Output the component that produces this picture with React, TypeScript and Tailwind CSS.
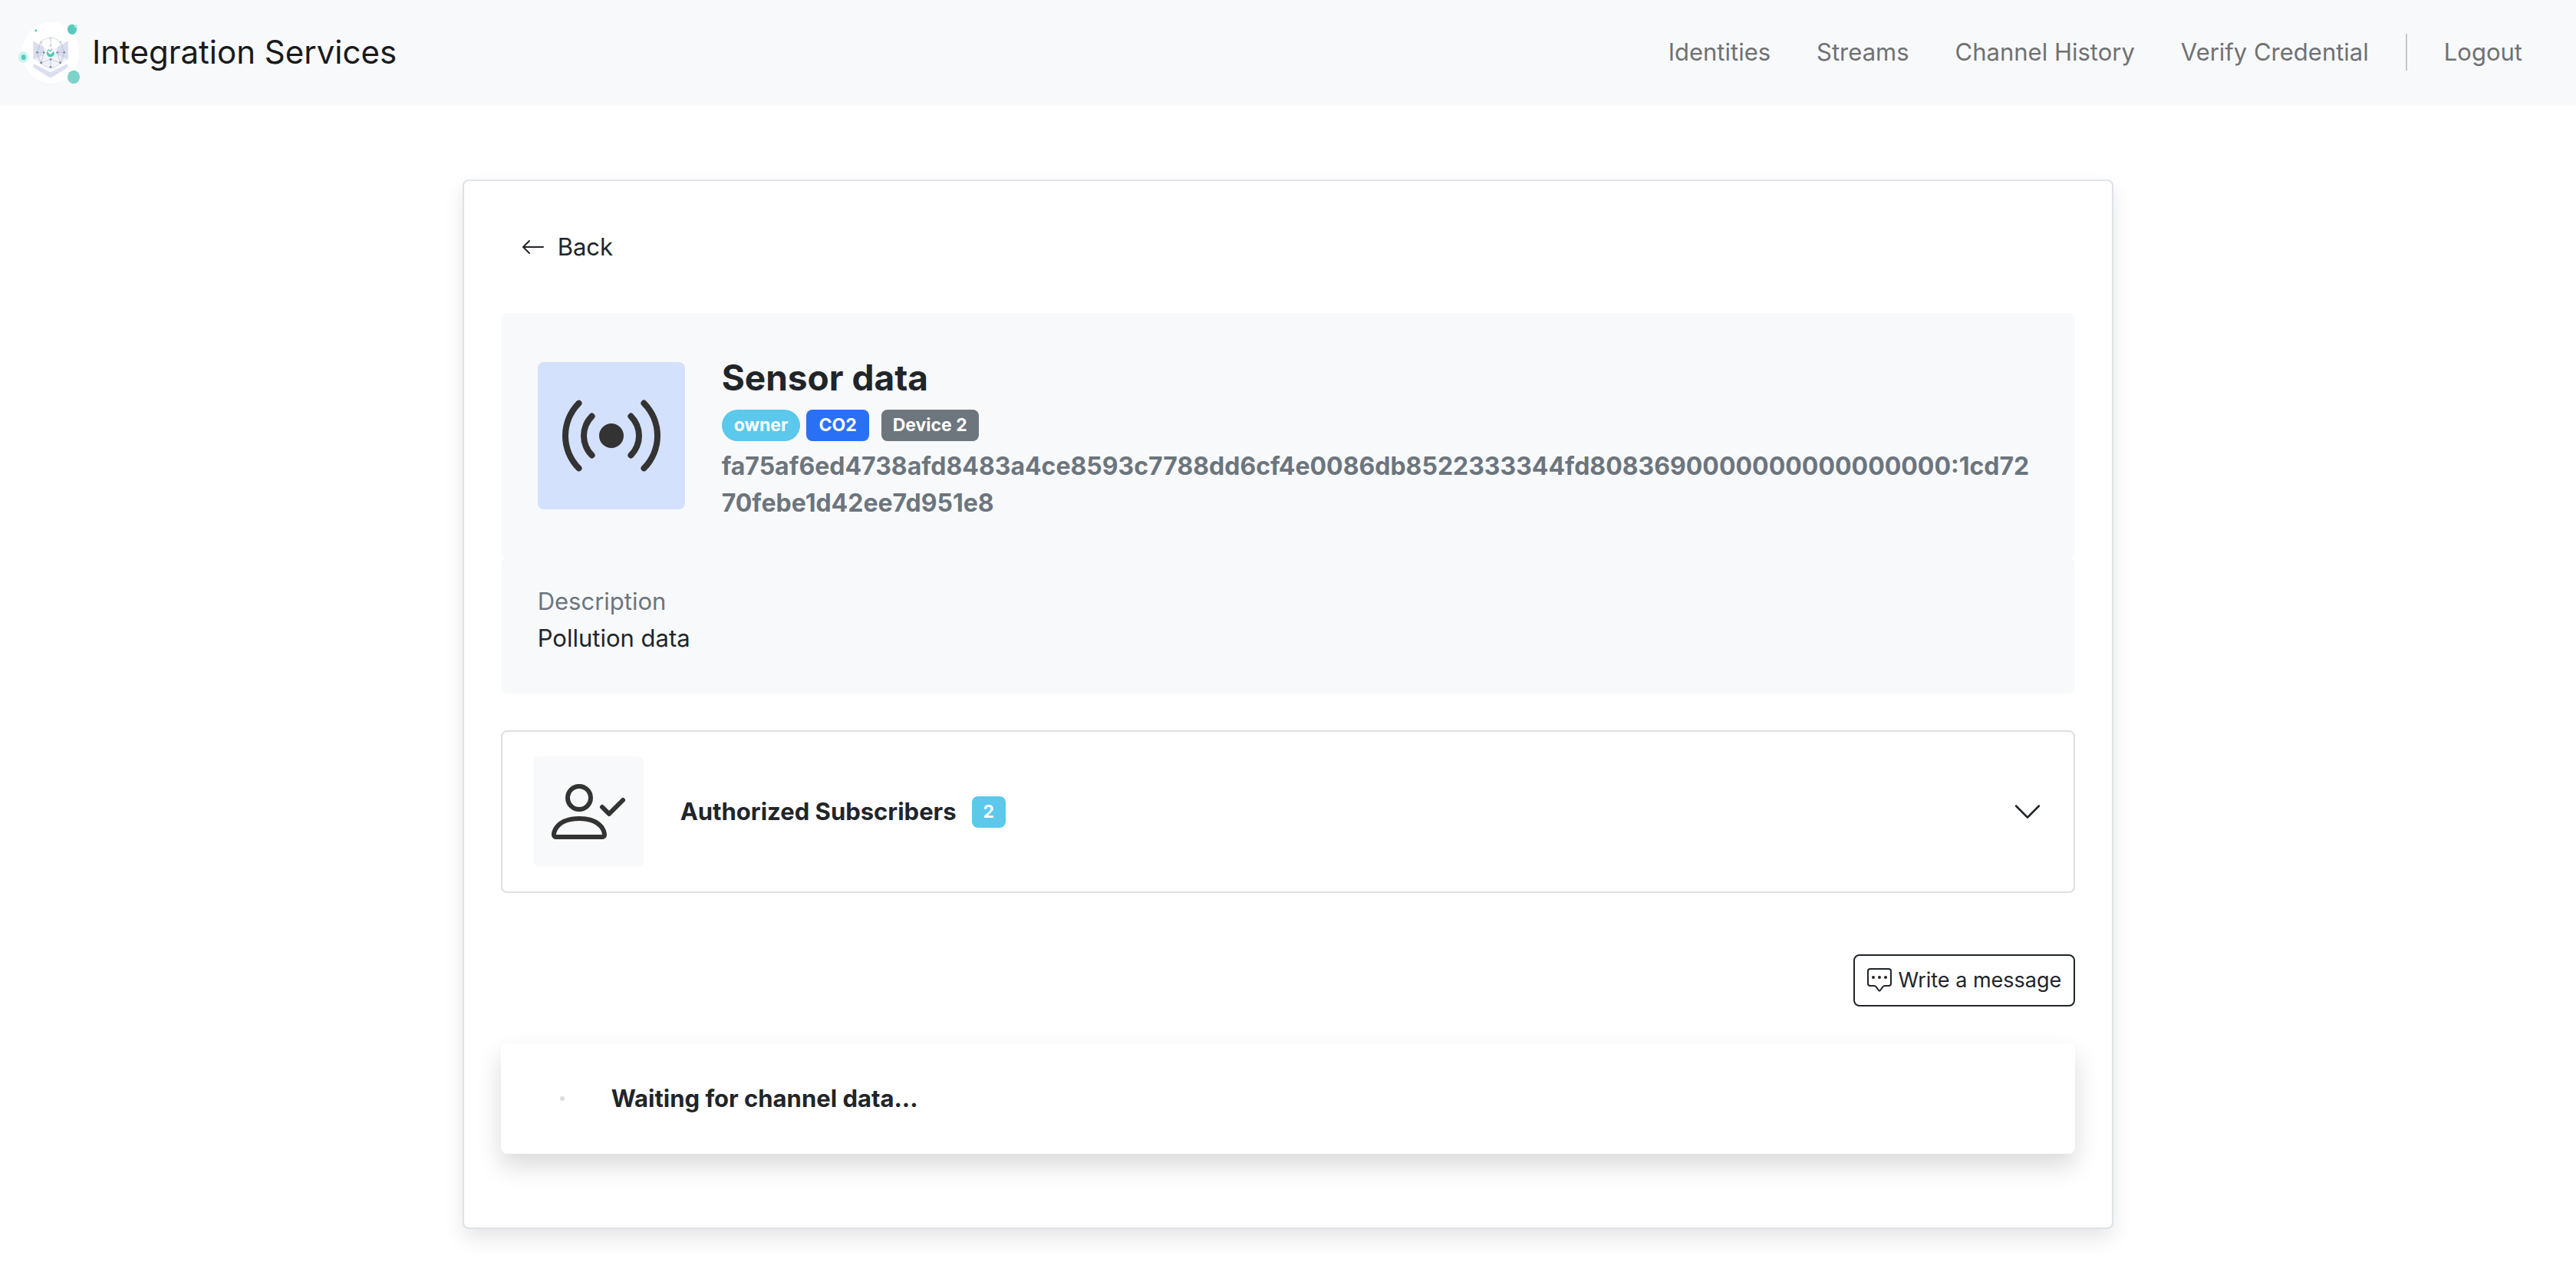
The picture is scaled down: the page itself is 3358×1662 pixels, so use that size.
import { useState } from 'react';
import { BsArrowLeft, BsBroadcast, BsChatSquareDots } from 'react-icons/bs';

const links = ['Identities', 'Streams', 'Channel History', 'Verify Credential'];

function Logo() {
  return (
    <svg viewBox="36 42 252 252" className="size-[84px] shrink-0" aria-hidden="true">
      <ellipse cx="168" cy="170" rx="111" ry="120" fill="#fff" />
      <circle cx="110" cy="83" r="4.500" fill="#5ac8bd" />
      <ellipse cx="252" cy="79" rx="18" ry="20" fill="#5ac8bd" />
      <circle cx="266" cy="66" r="7" fill="#a8efe8" opacity="0.700" />
      <ellipse cx="61" cy="188" rx="20" ry="22" fill="#c9f5f1" />
      <ellipse cx="62" cy="188" rx="9" ry="10" fill="#5ac8bd" />
      <ellipse cx="258" cy="265" rx="24" ry="26" fill="#7bd3ca" />
      <path d="M100 124l68 40 68-40v72l-68 40-68-40z" fill="#f1f3fa" />
      <path d="M100 124l42 26v30l-42 16zM236 124l-42 26v30l42 16z" fill="#d9deee" />
      <path d="M101 218q0-5 5-3l62 32 62-32q6-2 6 5 0 8-6 11l-54 34q-8 5-16 0l-54-34q-5-3-5-13z" fill="#dbe0f0" />
      <ellipse cx="168" cy="170" rx="53" ry="58" fill="none" stroke="#cfd3e0" strokeWidth="2.500" />
      <g fill="none" stroke="#b3b8cb" strokeWidth="2">
        <path d="M168 112v30M131 128l-16 42 16 39M206 128l15 42-15 39M115 169h28M221 169h-28M131 209l12-40M131 209l37-13 26-27 12 40M168 196v30M206 209l-38-13" />
        <path d="M131 128l12 41 25-27 25 27 13-41" opacity="0.500" />
      </g>
      <path d="M168 141l27 28-27 27-26-27z" fill="#fff" />
      <path d="M156 162a15 15 0 1 0 24 2l-12 13-9-8" fill="#52c4b8" />
      <path d="M157 165l9 9 14-15" fill="none" stroke="#fff" strokeWidth="4" />
      <path d="M155 163l6-4 5 5 8-7" fill="none" stroke="#52c4b8" strokeWidth="4" />
      <g fill="#c9cddb">
        <circle cx="168" cy="112" r="4" />
        <circle cx="131" cy="128" r="4" />
        <circle cx="206" cy="128" r="4" />
        <circle cx="168" cy="142" r="4" />
      </g>
      <g fill="#8489a5">
        <circle cx="115" cy="169" r="4" />
        <circle cx="221" cy="169" r="4" />
        <circle cx="142" cy="169" r="4" />
        <circle cx="194" cy="169" r="4" />
        <circle cx="131" cy="209" r="4.500" />
        <circle cx="206" cy="209" r="4.500" />
        <circle cx="168" cy="196" r="4" />
        <circle cx="168" cy="226" r="4" />
      </g>
    </svg>
  );
}

function PersonCheck() {
  return (
    <svg viewBox="0 0 16 16" fill="currentColor" className="size-24" aria-hidden="true">
      <path d="M6 8a3 3 0 1 0 0-6 3 3 0 0 0 0 6zm2-3a2 2 0 1 1-4 0 2 2 0 0 1 4 0zm4 8c0 1-1 1-1 1H1s-1 0-1-1 1-4 6-4 6 3 6 4zm-1-.004c-.001-.246-.154-.986-.832-1.664C9.516 10.680 8.289 10 6 10c-2.290 0-3.516.680-4.168 1.332-.678.678-.830 1.418-.832 1.664h10z" />
      <path d="M15.854 5.146a.5.5 0 0 1 0 .708l-3 3a.5.5 0 0 1-.708 0l-1.500-1.500a.5.5 0 0 1 .708-.708L12.500 7.793l2.646-2.647a.5.5 0 0 1 .708 0z" />
    </svg>
  );
}

export default function App() {
  const [open, setOpen] = useState(false);

  return (
    <div className="min-h-screen bg-white font-['Inter',sans-serif] text-[31px] leading-[48px] text-[#212529]">
      <header className="flex items-center justify-between bg-[#f8f9fb] pt-[26px] pr-[70px] pb-7 pl-[22px]">
        <a href="#" className="flex items-center gap-3.5 text-[42px] text-[#1a1a1a]">
          <Logo />
          Integration Services
        </a>
        <nav className="flex items-center gap-12 text-[#707172]">
          <ul className="flex gap-15">
            {links.map((label) => (
              <li key={label}>
                <a href="#">{label}</a>
              </li>
            ))}
          </ul>
          <span className="h-12 w-0.5 bg-[#c6c7c8]" />
          <a href="#">Logout</a>
        </nav>
      </header>

      <main className="mx-auto w-2/3 px-[43px] pt-24 pb-[60px]">
        <section className="rounded-lg border-2 border-[#dee2e6] bg-white px-12 pt-12 pb-24 shadow-[0_12px_26px_rgba(0,0,0,0.1)]">
          <button type="button" className="mb-12 flex items-center gap-4 px-[26px] py-3.5">
            <BsArrowLeft className="size-8" />
            Back
          </button>

          <div className="flex items-center gap-12 rounded-lg bg-[#f8f9fb] p-12">
            <div className="flex size-48 shrink-0 items-center justify-center rounded-lg bg-[#d4e1fc] text-[#333]">
              <BsBroadcast className="size-32" />
            </div>
            <div className="min-w-0">
              <h1 className="text-[46px] leading-[72px] font-bold">Sensor data</h1>
              <div className="flex h-14 items-start pt-1.5 text-[23px] leading-[41px] font-bold text-white">
                <span className="mr-2 rounded-full bg-[#5bc8ec] px-4">owner</span>
                <span className="mr-4 rounded-lg bg-[#2a70f5] px-4">CO2</span>
                <span className="rounded-lg bg-[#6d757d] px-[15px]">Device 2</span>
              </div>
              <p className="text-[32px] font-bold break-all text-[#6c757d]">
                fa75af6ed4738afd8483a4ce8593c7788dd6cf4e0086db8522333344fd8083690000000000000000:1cd7270febe1d42ee7d951e8
              </p>
            </div>
          </div>

          <dl className="rounded-lg bg-[#f8f9fb] px-12 pt-8 pb-12">
            <dt className="text-[#6c757d]">Description</dt>
            <dd>Pollution data</dd>
          </dl>

          <h2 className="mt-12">
            <button
              type="button"
              aria-expanded={open}
              onClick={() => setOpen(!open)}
              className="flex w-full items-center rounded-lg border-2 border-[#dfdfdf] px-10 py-8 text-left"
            >
              <span className="mr-12 flex size-36 items-center justify-center rounded-lg bg-[#f8f9fb] text-[#333]">
                <PersonCheck />
              </span>
              <span className="mr-5 font-bold">Authorized Subscribers</span>
              <span className="rounded-lg bg-[#5bc8ec] px-[15px] text-[23px] leading-[41px] font-bold text-white">2</span>
              <svg viewBox="0 0 16 16" fill="currentColor" className="ml-auto size-10" aria-hidden="true">
                <path
                  fillRule="evenodd"
                  d="M1.646 4.646a.5.5 0 0 1 .708 0L8 10.293l5.646-5.647a.5.5 0 0 1 .708.708l-6 6a.5.5 0 0 1-.708 0l-6-6a.5.5 0 0 1 0-.708z"
                />
              </svg>
            </button>
          </h2>

          <div className="mt-20 flex justify-end">
            <button type="button" className="flex h-[68px] items-center gap-2 rounded-lg border-2 border-[#212529] px-4 text-[27px]">
              <BsChatSquareDots className="size-8" />
              Write a message
            </button>
          </div>

          <div role="status" className="mt-12 flex items-center gap-8 rounded-lg bg-white p-12 shadow-[0_16px_32px_rgba(0,0,0,0.15)]">
            <span className="flex w-16 justify-center">
              <span className="size-1.5 rounded-full bg-[#dcdcdc]" />
            </span>
            <span className="font-bold">Waiting for channel data...</span>
          </div>
        </section>
      </main>
    </div>
  );
}
